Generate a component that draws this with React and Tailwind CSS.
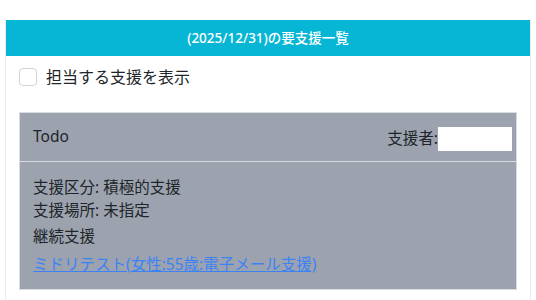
export default function App() {
  return (
    <div
      className="min-h-screen bg-white pt-5 px-[5px]"
      style={{ fontFamily: '"Noto Sans", "Noto Sans CJK JP", sans-serif' }}
    >
      <div className="border-x border-[#ececec] min-h-[280px]">
        <div className="h-9 bg-[#06b6d4] flex items-center justify-center text-white text-[13.5px] font-medium">
          (2025/12/31)の要支援一覧
        </div>
        <div className="px-[13px] pb-4">
          <label className="flex items-center mt-3 h-[18px] text-[16px] text-[#212529]">
            <span className="w-[18px] h-[18px] rounded-[4px] border border-[#d4d4d4] bg-white" />
            <span className="ml-[9px]">担当する支援を表示</span>
          </label>
          <div className="mt-[26px] bg-[#9ca3af] border border-[#d9dce1] text-[#212529] text-[15.5px]">
            <div className="h-[49px] flex items-center justify-between pl-[13px] pr-[4px] border-b border-[#d6d9de]">
              <span className="-mt-[1px]">Todo</span>
              <div className="flex items-center mt-[3px]">
                <span>支援者:</span>
                <span className="w-[74px] h-6 bg-white" />
              </div>
            </div>
            <div className="pl-[13px] pt-[14px] pb-[13px] leading-[23px]">
              <div>支援区分: 積極的支援</div>
              <div>支援場所: 未指定</div>
              <div className="mt-[3px]">継続支援</div>
              <a href="#" className="block mt-[5px] text-[#3b82f6] underline">
                ミドリテスト(女性:55歳:電子メール支援)
              </a>
            </div>
          </div>
        </div>
      </div>
    </div>
  );
}
